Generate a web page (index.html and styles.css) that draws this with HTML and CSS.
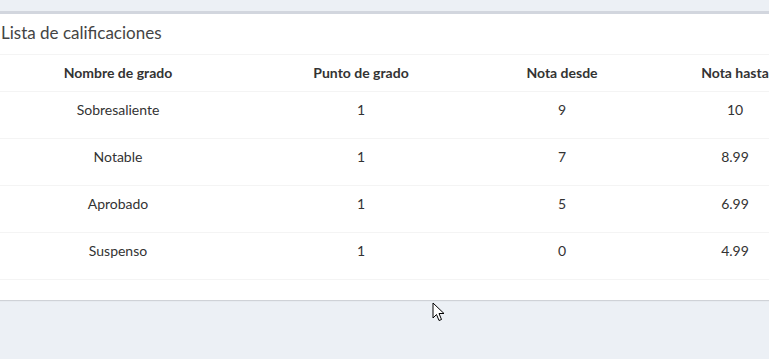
FILE: index.html
```html
<!DOCTYPE html>
<html lang="es">
<head>
<meta charset="utf-8">
<title>Lista de calificaciones</title>
<link rel="stylesheet" href="styles.css">
</head>
<body>
<div class="page">
  <section class="box">
    <header class="box-header">
      <h3 class="box-title">Lista de calificaciones</h3>
    </header>
    <div class="box-body">
      <table class="grades">
        <colgroup>
          <col class="c1"><col class="c2"><col class="c3"><col class="c4">
        </colgroup>
        <thead>
          <tr><th>Nombre de grado</th><th>Punto de grado</th><th>Nota desde</th><th>Nota hasta</th></tr>
        </thead>
        <tbody>
          <tr><td>Sobresaliente</td><td>1</td><td>9</td><td>10</td></tr>
          <tr><td>Notable</td><td>1</td><td>7</td><td>8.99</td></tr>
          <tr><td>Aprobado</td><td>1</td><td>5</td><td>6.99</td></tr>
          <tr><td>Suspenso</td><td>1</td><td>0</td><td>4.99</td></tr>
        </tbody>
      </table>
    </div>
  </section>
</div>
<svg class="cursor" width="13" height="20" viewBox="0 0 13 20" aria-hidden="true">
  <path d="M1 1 L1 16 L4.5 12.5 L7 18.5 L9.5 17.5 L7 11.5 L12 11.5 Z" fill="#fff" stroke="#000" stroke-width="1" stroke-linejoin="round"/>
</svg>
</body>
</html>
```

FILE: styles.css
```css
html, body {
  margin: 0;
  padding: 0;
}
body {
  background: #ecf0f5;
  width: 769px;
  height: 359px;
  overflow: hidden;
  font-family: "Source Sans Pro", Lato, "Noto Sans", sans-serif;
  color: #333;
  font-size: 14px;
  position: relative;
}
.page {
  padding-top: 11px;
}
.box {
  background: #fff;
  border-top: 3px solid #d2d6de;
  box-shadow: 0 1px 1px rgba(0,0,0,0.12);
  width: 100%;
}
.box-header {
  padding: 9px 0 11px 1px;
  border-bottom: 1px solid #f4f4f4;
}
.box-title {
  margin: 0;
  font-size: 17px;
  line-height: 20px;
  font-weight: 400;
  color: #444;
}
.box-body {
  padding-bottom: 20px;
  overflow: hidden;
}
.grades {
  border-collapse: collapse;
  table-layout: fixed;
  width: 832px;
}
.c1 { width: 236px; }
.c2 { width: 250px; }
.c3 { width: 152px; }
.c4 { width: 194px; }
.grades th, .grades td {
  text-align: center;
  padding: 8px 0;
  line-height: 20px;
  border-bottom: 1px solid #f4f4f4;
  vertical-align: top;
  white-space: nowrap;
}
.grades th {
  font-weight: 700;
  font-size: 14px;
}
.grades td {
  height: 30px;
}
.cursor {
  position: absolute;
  left: 432px;
  top: 302px;
}
```
